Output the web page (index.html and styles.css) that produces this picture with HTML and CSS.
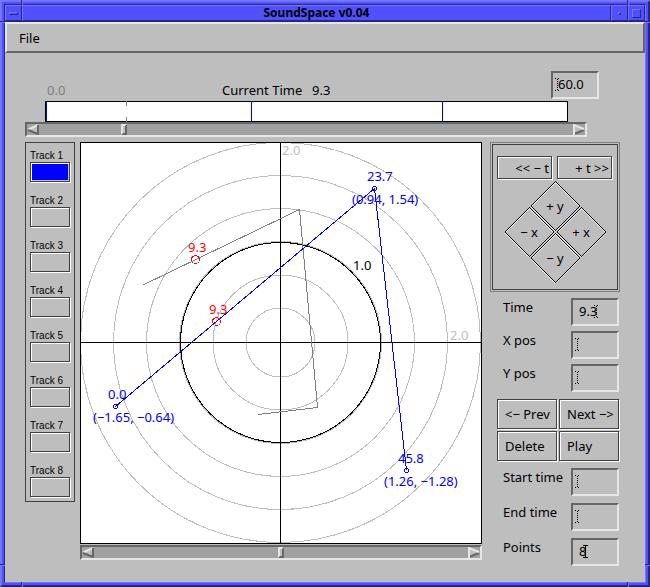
FILE: index.html
```html
<!DOCTYPE html>
<html lang="en">
<head>
    <meta charset="UTF-8">
    <meta name="viewport" content="width=device-width, initial-scale=1.0">
    <title>SoundSpace v0.04</title>
    <link rel="stylesheet" href="styles.css">
</head>
<body>
    <div class="window">
        <div class="frame">
            <header class="titlebar">
                <button class="win-btn" aria-label="Window menu"><span class="glyph glyph-menu"></span></button>
                <h1>SoundSpace v0.04</h1>
                <button class="win-btn" aria-label="Minimize"><span class="glyph glyph-min"></span></button>
                <button class="win-btn" aria-label="Maximize"><span class="glyph glyph-max"></span></button>
            </header>

            <nav class="menubar">
                <button class="menu-item">File</button>
            </nav>

            <main class="content">
                <section class="timeline">
                    <div class="time-head">
                        <span class="start-time">0.0</span>
                        <span class="current-label">Current Time</span>
                        <span>9.3</span>
                        <div class="field field-end">
                            <input type="text" value="60.0" aria-label="Total time">
                            <svg class="caret caret-start" viewBox="0 0 5 13"><path d="M0 .5h2M3 .5h2M0 12.5h2M3 12.5h2M2.5 1v11"/></svg>
                        </div>
                    </div>
                    <div class="time-bar">
                        <span class="mark" style="left: 0%"></span>
                        <span class="mark now" style="left: 15.4%"></span>
                        <span class="mark" style="left: 39.4%"></span>
                        <span class="mark" style="left: 76.1%"></span>
                    </div>
                    <div class="scroller">
                        <svg class="arrow" viewBox="0 0 12 11"><path class="face" d="M0 5.5L12 0V11Z"/><path class="lite" d="M1 5.5L11 1"/><path class="dark" d="M1 6L11 10V1"/></svg>
                        <input type="range" min="0" max="1000" value="155" aria-label="Current time">
                        <svg class="arrow" viewBox="0 0 12 11"><path class="face" d="M12 5.5L0 0V11Z"/><path class="dark" d="M1 10L11 6"/><path class="lite" d="M1 11V1L11 5"/></svg>
                    </div>
                </section>

                <div class="workspace">
                    <section class="tracks">
                        <div class="track"><label for="track1">Track 1</label><button id="track1" class="active"></button></div>
                        <div class="track"><label for="track2">Track 2</label><button id="track2"></button></div>
                        <div class="track"><label for="track3">Track 3</label><button id="track3"></button></div>
                        <div class="track"><label for="track4">Track 4</label><button id="track4"></button></div>
                        <div class="track"><label for="track5">Track 5</label><button id="track5"></button></div>
                        <div class="track"><label for="track6">Track 6</label><button id="track6"></button></div>
                        <div class="track"><label for="track7">Track 7</label><button id="track7"></button></div>
                        <div class="track"><label for="track8">Track 8</label><button id="track8"></button></div>
                    </section>

                    <section class="stage">
                        <svg class="plot" viewBox="0 0 400 400">
                            <!-- distance rings -->
                            <g class="rings">
                                <circle cx="199.5" cy="199.5" r="34.5"/>
                                <circle cx="199.5" cy="199.5" r="67.5"/>
                                <circle cx="199.5" cy="199.5" r="101"/>
                                <circle cx="199.5" cy="199.5" r="134"/>
                                <circle cx="199.5" cy="199.5" r="167"/>
                                <circle cx="199.5" cy="199.5" r="200"/>
                            </g>
                            <circle class="unit" cx="199.5" cy="199.5" r="100"/>
                            <path class="axis" d="M199.5 0V400M0 199.5H400"/>
                            <text class="faint" x="201" y="12">2.0</text>
                            <text class="faint" x="369" y="197">2.0</text>
                            <text x="272" y="127">1.0</text>

                            <!-- inactive track -->
                            <polyline class="path-off" points="62,142 218.5,66.5 236.5,264.5 177,271.5"/>

                            <!-- selected track -->
                            <polyline class="path-on" points="34.5,263.5 293.5,45.5 325.5,327.5"/>
                            <g class="points">
                                <circle cx="34.5" cy="263.5" r="2"/>
                                <circle cx="293.5" cy="45.5" r="2"/>
                                <circle cx="325.5" cy="327.5" r="2"/>
                            </g>
                            <g class="point-text">
                                <text x="27" y="256">0.0</text>
                                <text x="12" y="279">(−1.65, −0.64)</text>
                                <text x="286" y="38">23.7</text>
                                <text x="271" y="61">(0.94, 1.54)</text>
                                <text x="317" y="320">45.8</text>
                                <text x="303" y="343">(1.26, −1.28)</text>
                            </g>

                            <!-- current positions -->
                            <g class="now-points">
                                <circle cx="114.5" cy="116.5" r="4"/>
                                <circle cx="135.5" cy="178.5" r="4"/>
                            </g>
                            <g class="now-text">
                                <text x="107" y="109">9.3</text>
                                <text x="128" y="171">9.3</text>
                            </g>
                        </svg>
                        <div class="scroller">
                            <svg class="arrow" viewBox="0 0 12 11"><path class="face" d="M0 5.5L12 0V11Z"/><path class="lite" d="M1 5.5L11 1"/><path class="dark" d="M1 6L11 10V1"/></svg>
                            <input type="range" min="0" max="1000" value="500" aria-label="Zoom">
                            <svg class="arrow" viewBox="0 0 12 11"><path class="face" d="M12 5.5L0 0V11Z"/><path class="dark" d="M1 10L11 6"/><path class="lite" d="M1 11V1L11 5"/></svg>
                        </div>
                    </section>

                    <aside class="controls">
                        <div class="pad">
                            <div class="pad-time">
                                <button>&lt;&lt; − t</button>
                                <button>+ t &gt;&gt;</button>
                            </div>
                            <div class="diamonds">
                                <button class="up"><svg viewBox="0 0 52 52"><path class="hi" d="M26.5 2.5L51 27L26.5 51.5L2 27Z"/><path class="edge" d="M26.5 1.5L51 26L26.5 50.5L2 26Z"/></svg><span>+ y</span></button>
                                <button class="left"><svg viewBox="0 0 52 52"><path class="hi" d="M26.5 2.5L51 27L26.5 51.5L2 27Z"/><path class="edge" d="M26.5 1.5L51 26L26.5 50.5L2 26Z"/></svg><span>− x</span></button>
                                <button class="right"><svg viewBox="0 0 52 52"><path class="hi" d="M26.5 2.5L51 27L26.5 51.5L2 27Z"/><path class="edge" d="M26.5 1.5L51 26L26.5 50.5L2 26Z"/></svg><span>+ x</span></button>
                                <button class="down"><svg viewBox="0 0 52 52"><path class="hi" d="M26.5 2.5L51 27L26.5 51.5L2 27Z"/><path class="edge" d="M26.5 1.5L51 26L26.5 50.5L2 26Z"/></svg><span>− y</span></button>
                            </div>
                        </div>

                        <div class="form">
                            <div class="row">
                                <label for="time">Time</label>
                                <div class="field">
                                    <input type="text" id="time" value="9.3">
                                    <svg class="caret caret-end" viewBox="0 0 5 13"><path d="M0 .5h2M3 .5h2M0 12.5h2M3 12.5h2M2.5 1v11"/></svg>
                                </div>
                            </div>
                            <div class="row">
                                <label for="xpos">X pos</label>
                                <div class="field">
                                    <input type="text" id="xpos">
                                    <svg class="caret caret-start" viewBox="0 0 5 13"><path d="M0 .5h2M3 .5h2M0 12.5h2M3 12.5h2M2.5 1v11"/></svg>
                                </div>
                            </div>
                            <div class="row">
                                <label for="ypos">Y pos</label>
                                <div class="field">
                                    <input type="text" id="ypos">
                                    <svg class="caret caret-start" viewBox="0 0 5 13"><path d="M0 .5h2M3 .5h2M0 12.5h2M3 12.5h2M2.5 1v11"/></svg>
                                </div>
                            </div>
                        </div>

                        <div class="actions">
                            <button>&lt;− Prev</button>
                            <button>Next −&gt;</button>
                            <button>Delete</button>
                            <button>Play</button>
                        </div>

                        <div class="form form-range">
                            <div class="row">
                                <label for="start">Start time</label>
                                <div class="field">
                                    <input type="text" id="start">
                                    <svg class="caret caret-start" viewBox="0 0 5 13"><path d="M0 .5h2M3 .5h2M0 12.5h2M3 12.5h2M2.5 1v11"/></svg>
                                </div>
                            </div>
                            <div class="row">
                                <label for="end">End time</label>
                                <div class="field">
                                    <input type="text" id="end">
                                    <svg class="caret caret-start" viewBox="0 0 5 13"><path d="M0 .5h2M3 .5h2M0 12.5h2M3 12.5h2M2.5 1v11"/></svg>
                                </div>
                            </div>
                            <div class="row">
                                <label for="points">Points</label>
                                <div class="field">
                                    <input type="text" id="points" value="8">
                                    <svg class="caret caret-focus" viewBox="0 0 5 13"><path d="M0 .5h5M0 12.5h5M2.5 0v13"/></svg>
                                </div>
                            </div>
                        </div>
                    </aside>
                </div>
            </main>
        </div>

        <!-- resize handle grooves -->
        <span class="groove groove-v top west"></span>
        <span class="groove groove-v top east"></span>
        <span class="groove groove-v bottom west"></span>
        <span class="groove groove-v bottom east"></span>
        <span class="groove groove-h north left-side"></span>
        <span class="groove groove-h north right-side"></span>
        <span class="groove groove-h south left-side"></span>
        <span class="groove groove-h south right-side"></span>
    </div>
</body>
</html>
```
FILE: styles.css
```css
:root {
    --gray: #bebebe;
    --lite: #e6e6e6;
    --dark: #666;
    --line: #404040;
    --blue: #5050ff;
    --blue-lite: #7474ff;
    --blue-dark: #272780;
}

* {
    box-sizing: border-box;
}

body {
    margin: 0;
    font-family: "Noto Sans", sans-serif;
    font-size: 13px;
    line-height: 18px;
    color: #000;
}

button,
input {
    font: inherit;
    color: inherit;
    margin: 0;
    border-radius: 0;
}

button {
    padding: 0;
    border: none;
    background: var(--gray);
}

/* window frame */
.window {
    position: relative;
    display: flex;
    min-height: 100vh;
    padding: 2px;
    background: var(--blue);
    border: 2px solid;
    border-color: var(--blue-lite) var(--blue-dark) var(--blue-dark) var(--blue-lite);
}

.frame {
    flex: 1;
    min-width: 0;
    background: var(--gray);
    border: 1px solid;
    border-color: var(--blue-dark) var(--blue-lite) var(--blue-lite) var(--blue-dark);
}

.groove {
    position: absolute;
    background: var(--blue-dark);
}

.groove-v {
    width: 2px;
    height: 5px;
    border-right: 1px solid var(--blue-lite);
}

.groove-h {
    width: 5px;
    height: 2px;
    border-bottom: 1px solid var(--blue-lite);
}

.top { top: -2px; }
.bottom { bottom: -2px; }
.west { left: 19px; }
.east { right: 19px; }
.north { top: 19px; }
.south { bottom: 19px; }
.left-side { left: -2px; }
.right-side { right: -2px; }

.titlebar {
    display: flex;
    height: 17px;
    background: var(--blue);
    border-bottom: 1px solid var(--blue-dark);
}

.titlebar h1 {
    flex: 1;
    margin: 0;
    font-size: 12px;
    line-height: 14px;
    text-align: center;
}

.titlebar h1,
.win-btn {
    border: 1px solid;
    border-color: var(--blue-lite) var(--blue-dark) var(--blue-dark) var(--blue-lite);
}

.win-btn {
    display: flex;
    align-items: center;
    justify-content: center;
    width: 17px;
    background: var(--blue);
}

.glyph {
    border: 1px solid;
    border-color: var(--blue-lite) var(--blue-dark) var(--blue-dark) var(--blue-lite);
}

.glyph-menu {
    width: 9px;
    height: 3px;
}

.glyph-min {
    width: 3px;
    height: 3px;
}

.glyph-max {
    width: 9px;
    height: 9px;
}

.menubar {
    display: flex;
    align-items: center;
    height: 31px;
    padding-left: 12px;
    border: 2px solid;
    border-color: var(--lite) var(--dark) var(--dark) var(--lite);
}

.content {
    padding: 18px 25px 9px 20px;
}

/* timeline */
.timeline {
    margin-right: 33px;
}

.time-head {
    display: flex;
    align-items: flex-end;
    margin-right: -12px;
    padding-left: 22px;
}

.start-time {
    width: 175px;
    color: #808080;
}

.current-label {
    width: 80px;
    margin-right: 10px;
    overflow: hidden;
    white-space: nowrap;
}

.field-end {
    margin-left: auto;
}

.time-bar {
    position: relative;
    height: 21px;
    margin: 2px 19px 0 20px;
    background: #fff;
    border: 1px solid #000;
}

.mark {
    position: absolute;
    top: 0;
    bottom: 0;
    width: 1px;
    background: #0000e0;
}

.mark.now {
    top: -1px;
    bottom: -1px;
    background: linear-gradient(#808080 5px, transparent 5px 16px, #808080 16px);
}

.scroller {
    display: flex;
    align-items: center;
    height: 15px;
    background: #a1a1a1;
    border: 2px solid;
    border-color: var(--dark) var(--lite) var(--lite) var(--dark);
}

.scroller input {
    flex: 1;
    min-width: 0;
    height: 11px;
    appearance: none;
    background: none;
}

.scroller input::-webkit-slider-thumb {
    appearance: none;
    width: 6px;
    height: 11px;
    background: var(--gray);
    border: 2px solid;
    border-color: var(--lite) var(--dark) var(--dark) var(--lite);
}

.arrow {
    width: 12px;
    height: 11px;
    fill: none;
    stroke-width: 2;
}

.arrow .face { fill: var(--gray); }
.arrow .lite { stroke: var(--lite); }
.arrow .dark { stroke: var(--dark); }

/* main area */
.workspace {
    display: grid;
    grid-template-columns: 50px 1fr 130px;
    align-items: start;
    margin-top: 5px;
}

.tracks {
    display: flex;
    flex-direction: column;
    gap: 11px;
    padding: 5px 4px 4px;
    border: 1px solid var(--line);
}

.track label {
    display: block;
    padding-top: 2px;
    font-family: "Liberation Sans", sans-serif;
    font-size: 10px;
    line-height: 12px;
}

.track button {
    display: block;
    width: 40px;
    height: 20px;
}

.track button,
.pad-time button,
.actions button {
    border: 1px solid var(--line);
    box-shadow: inset 1px 1px 0 #fff, 1px 1px 0 #fff;
}

.track .active {
    padding: 1px;
    background: #00f content-box;
}

.stage {
    margin: 0 8px 0 5px;
}

.plot {
    display: block;
    width: 100%;
    background: #fff;
    border: 1px solid #000;
    fill: none;
    shape-rendering: crispEdges;
}

.plot text { fill: #000; }
.plot .faint { fill: #bebebe; }
.rings { stroke: #bebebe; }
.unit,
.axis { stroke: #000; }
.path-off { stroke: #808080; }
.path-on,
.points { stroke: #00f; }
.plot .point-text text { fill: #00f; }
.now-points { stroke: #f00; }
.plot .now-text text { fill: #f00; }

.stage .scroller {
    margin-top: 1px;
}

/* right column */
.pad {
    height: 150px;
    padding: 13px 6px 0;
    border: 1px solid #808080;
    box-shadow: inset 0 0 0 1px var(--gray), inset 0 0 0 2px var(--line);
}

.pad-time {
    display: flex;
    gap: 5px;
}

.pad-time button {
    width: 55px;
    height: 23px;
    padding-right: 2px;
    text-align: right;
}

.diamonds {
    display: grid;
    grid-template: repeat(4, 26px) / repeat(4, 26px);
    justify-content: center;
    margin-top: 1px;
}

.diamonds button {
    display: grid;
    place-items: center;
    background: none;
    clip-path: polygon(50% 0, 100% 50%, 50% 100%, 0 50%);
}

.diamonds svg,
.diamonds span {
    grid-area: 1 / 1;
}

.diamonds svg {
    width: 52px;
    height: 52px;
    fill: none;
    shape-rendering: crispEdges;
}

.diamonds .hi { stroke: #fff; }
.diamonds .edge { stroke: #000; }

.up { grid-area: 1 / 2 / 3 / 4; }
.left { grid-area: 2 / 1 / 4 / 3; }
.right { grid-area: 2 / 3 / 4 / 5; }
.down { grid-area: 3 / 2 / 5 / 4; }

.form {
    display: flex;
    flex-direction: column;
    gap: 5px;
    margin: 6px 1px 7px 13px;
}

.form-range {
    gap: 7px;
}

.row {
    display: flex;
    justify-content: space-between;
}

.field {
    position: relative;
    width: 48px;
    height: 28px;
}

.field input {
    display: block;
    width: 100%;
    height: 100%;
    padding: 0 0 2px 6px;
    background: none;
    border: 2px solid;
    border-color: var(--dark) var(--lite) var(--lite) var(--dark);
    outline: none;
}

.field-end input {
    padding-left: 5px;
}

.caret {
    position: absolute;
    top: 7px;
    width: 5px;
    height: 13px;
    fill: none;
    stroke: #000;
    stroke-dasharray: 1 1;
    shape-rendering: crispEdges;
}

.caret-start { left: 4px; }
.caret-end { left: 23px; }

.caret-focus {
    left: 12px;
    stroke-dasharray: none;
}

.actions {
    display: grid;
    grid-template-columns: 60px 60px;
    gap: 2px;
    margin: 0 1px 7px 7px;
}

.actions button {
    height: 30px;
    padding-left: 7px;
    text-align: left;
    white-space: nowrap;
}
```
